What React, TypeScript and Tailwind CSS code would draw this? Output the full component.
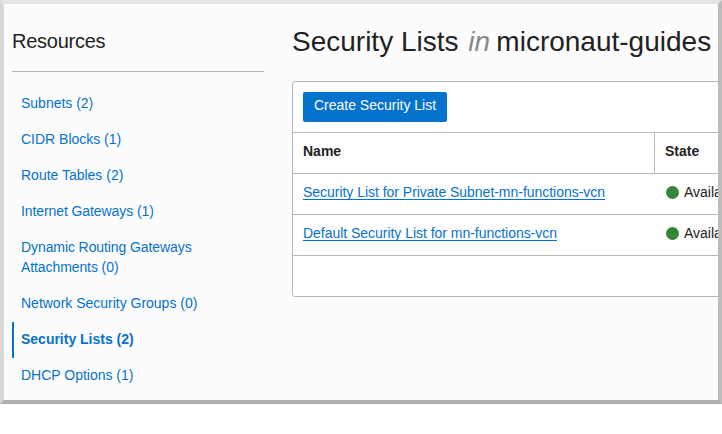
type Resource = { label: string; active?: boolean; tight?: boolean };

const resources: Resource[] = [
  { label: "Subnets (2)" },
  { label: "CIDR Blocks (1)" },
  { label: "Route Tables (2)" },
  { label: "Internet Gateways (1)", tight: true },
  { label: "Dynamic Routing Gateways Attachments (0)", tight: true },
  { label: "Network Security Groups (0)" },
  { label: "Security Lists (2)", active: true },
  { label: "DHCP Options (1)" },
];

const lists = ["Security List for Private Subnet-mn-functions-vcn", "Default Security List for mn-functions-vcn"];

function Sidebar() {
  return (
    <aside className="w-[252px] shrink-0">
      <h2 className="h-[68px] border-b border-[#b3b5bb] pt-[23px] text-[20px] leading-7 tracking-[-0.25px]">Resources</h2>
      <ul className="pt-[14px] text-[#0572ce]">
        {resources.map((r) => (
          <li
            key={r.label}
            className={
              "border-l-2 pt-[7px] pr-10 pb-[9px] pl-[7px] leading-5 " +
              (r.active ? "border-[#0572ce] font-bold " : "border-transparent ") +
              (r.tight ? "tracking-[-0.09px]" : "tracking-[-0.01px]")
            }
          >
            <a href="#">{r.label}</a>
          </li>
        ))}
      </ul>
    </aside>
  );
}

function ListsTable() {
  return (
    <section className="h-[216px] w-[600px] rounded-[3px] border border-[#b3b7be] bg-white">
      <div className="flex h-[51px] items-start border-b border-[#b3b7be] px-[10px] pt-[10px]">
        <button className="h-[30px] w-36 rounded-[2px] bg-[#0572ce] pb-[5px] leading-5 text-white">
          Create Security List
        </button>
      </div>
      <div className="flex h-[41px] border-b border-[#b3b7be] font-bold leading-5">
        <div className="w-[362px] border-r border-[#b3b7be] pt-2 pl-[10px]">Name</div>
        <div className="pt-2 pl-[10px]">State</div>
      </div>
      {lists.map((name) => (
        <div key={name} className="flex h-[41px] border-b border-[#b3b7be] leading-5">
          <div className="w-[362px] pt-2 pl-[10px]">
            <a
              href="#"
              className="inline-block h-[18px] border-b border-[#0572ce] leading-5 tracking-[-0.03px] text-[#0572ce]"
            >
              {name}
            </a>
          </div>
          <div className="flex pt-2 pl-[10.5px]">
            <span className="mt-[3.5px] mr-[5.5px] size-[13px] rounded-full bg-[#36863a]" />
            <span>Available</span>
          </div>
        </div>
      ))}
    </section>
  );
}

export default function App() {
  return (
    <div className="h-[434px] w-[722px] overflow-hidden bg-white font-['Liberation_Sans',Arial,sans-serif] text-[14px] text-[#222]">
      <div className="flex h-[404px] overflow-hidden border-4 border-t-[#e4e4e4] border-r-[#bbbbbb] border-b-[#b0b0b0] border-l-[#d7d7d7] bg-[#fcfcfc] pl-2">
        <Sidebar />
        <main className="ml-7 w-[600px] shrink-0">
          <h1 className="h-[77px] pt-5 text-[28px] leading-9 whitespace-nowrap">
            Security Lists <em className="ml-[2px] -mr-[1.5px] text-[#888]">in</em> micronaut-guides
          </h1>
          <ListsTable />
        </main>
      </div>
    </div>
  );
}
